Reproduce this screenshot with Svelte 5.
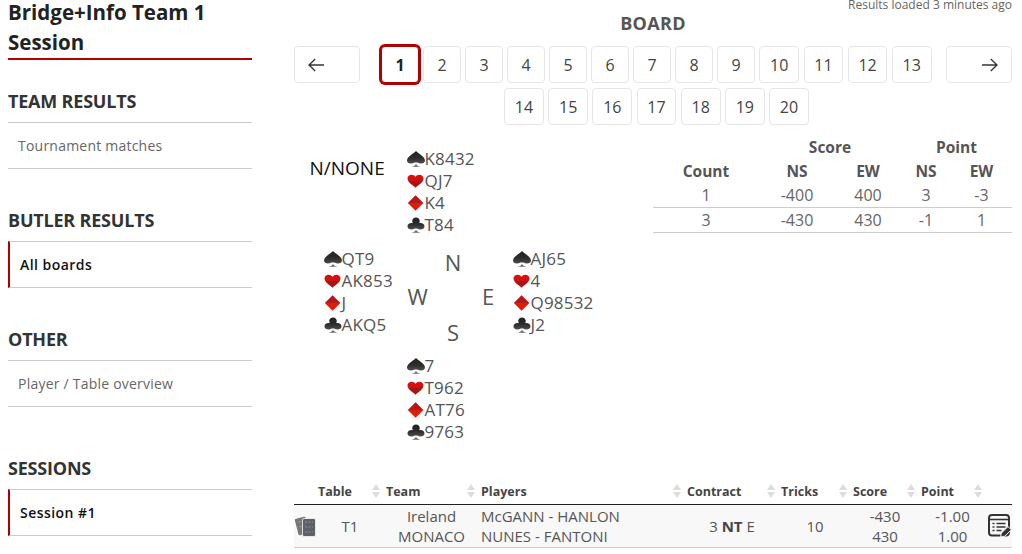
<script>
  const row1 = [1,2,3,4,5,6,7,8,9,10,11,12,13,14,15,16,17,18,19,20];
  const north = ['K8432','QJ7','K4','T84'];
  const west = ['QT9','AK853','J','AKQ5'];
  const east = ['AJ65','4','Q98532','J2'];
  const south = ['7','T962','AT76','9763'];
  const suits = ['spade','heart','diamond','club'];
  const heads = [
    { t: '', s: false }, { t: 'Table', s: true }, { t: 'Team', s: true }, { t: 'Players', s: true },
    { t: 'Contract', s: true }, { t: 'Tricks', s: true }, { t: 'Score', s: true }, { t: 'Point', s: true }, { t: '', s: false }
  ];
</script>

{#snippet suit(name)}
  <svg class="suit" viewBox="0 0 18 18" aria-hidden="true">
    {#if name === 'spade'}
      <path fill="url(#gDark)" d="M9 1C7.6 3.2 0 6.2 0 10.6 0 13.8 4.6 14.4 7.6 12.6L10.4 12.6C13.4 14.4 18 13.8 18 10.6 18 6.2 10.4 3.2 9 1Z"/>
      <path fill="#666" d="M4.5 16.8Q8.4 16.2 9 13.8 9.6 16.2 13.5 16.8Z"/>
    {:else if name === 'heart'}
      <path fill="url(#gHeart)" d="M8.5 15.8C6 13.4.5 10.6.5 6.6.5 4.2 2.4 2.8 4.6 2.8 6.4 2.8 7.7 3.6 8.5 4.8 9.3 3.6 10.6 2.8 12.4 2.8 14.6 2.8 16.5 4.2 16.5 6.6 16.5 10.6 11 13.4 8.5 15.8Z"/>
    {:else if name === 'diamond'}
      <path fill="url(#gDiamond)" d="M8.6 1.2L16.4 9 8.6 16.8.8 9Z"/>
    {:else}
      <path fill="url(#gDark)" d="M9 1.5C6.8 1.5 5.2 3.1 5.2 5 5.2 5.9 5.5 6.6 6 7.2 3 6.4.5 7.9.5 10.4.5 13.2 4.8 14.4 7.8 12.4L10.2 12.4C13.2 14.4 17.5 13.2 17.5 10.4 17.5 7.9 15 6.4 12 7.2 12.5 6.6 12.8 5.9 12.8 5 12.8 3.1 11.2 1.5 9 1.5Z"/>
      <path fill="#666" d="M4.5 16.8Q8.4 16.2 9 13.6 9.6 16.2 13.5 16.8Z"/>
    {/if}
  </svg>
{/snippet}

{#snippet hand(cards)}
  <div class="hand">
    {#each cards as c, i}
      <div class="card">{@render suit(suits[i])}<span>{c}</span></div>
    {/each}
  </div>
{/snippet}

<svg class="defs" width="0" height="0" aria-hidden="true">
  <defs>
    <linearGradient id="gDark" x1="0" y1="0" x2="0" y2="1">
      <stop offset="0" stop-color="#222"/><stop offset="0.55" stop-color="#2c2c2c"/><stop offset="1" stop-color="#4e4e4e"/>
    </linearGradient>
    <linearGradient id="gHeart" x1="0" y1="0" x2="0" y2="1">
      <stop offset="0" stop-color="#d81212"/><stop offset="0.5" stop-color="#d01010"/><stop offset="0.5" stop-color="#aa1414"/><stop offset="1" stop-color="#aa1414"/>
    </linearGradient>
    <linearGradient id="gDiamond" x1="0" y1="0" x2="0" y2="1">
      <stop offset="0" stop-color="#b01818"/><stop offset="0.5" stop-color="#b81818"/><stop offset="0.5" stop-color="#e41a08"/><stop offset="1" stop-color="#e41a08"/>
    </linearGradient>
  </defs>
</svg>

<div class="page">
  <aside>
    <h1><span>Bridge+Info Team 1</span><span>Session</span></h1>
    <h2 class="first">TEAM RESULTS</h2>
    <a class="item">Tournament matches</a>
    <h2>BUTLER RESULTS</h2>
    <a class="item active">All boards</a>
    <h2>OTHER</h2>
    <a class="item">Player / Table overview</a>
    <h2 class="last">SESSIONS</h2>
    <a class="item active">Session #1</a>
    <a class="item nb">Session #2</a>
  </aside>

  <main>
    <div class="loaded">Results loaded 3 minutes ago</div>
    <div class="board-title">BOARD</div>

    <nav>
      <button class="nav prev" aria-label="Previous">
        <svg width="16" height="16" viewBox="0 0 16 16"><path fill="none" stroke="#333" stroke-width="1.3" d="M16 8H1M7.2 2 1 8l6.2 6"/></svg>
      </button>
      <div class="nums">
        {#each row1 as n}
          <button class="num" class:sel={n === 1}>{n}</button>
        {/each}
      </div>
      <button class="nav next" aria-label="Next">
        <svg width="16" height="16" viewBox="0 0 16 16"><path fill="none" stroke="#333" stroke-width="1.3" d="M0 8h15M8.8 2 15 8l-6.2 6"/></svg>
      </button>
    </nav>

    <section class="top">
      <div class="deal">
        <div class="dealer">N/NONE</div>
        {@render hand(north)}
        <div></div>
        <div class="west">{@render hand(west)}</div>
        <div class="compass">
          <span class="cn">N</span>
          <span class="cw">W</span>
          <span class="ce">E</span>
          <span class="cs">S</span>
        </div>
        {@render hand(east)}
        <div></div>
        {@render hand(south)}
      </div>

      <table class="scores">
        <colgroup><col class="c1"/><col class="c2"/><col class="c3"/><col class="c4"/><col class="c5"/></colgroup>
        <thead>
          <tr><th></th><th colspan="2">Score</th><th colspan="2">Point</th></tr>
          <tr><th>Count</th><th>NS</th><th>EW</th><th>NS</th><th>EW</th></tr>
        </thead>
        <tbody>
          <tr><td>1</td><td>-400</td><td>400</td><td>3</td><td>-3</td></tr>
          <tr><td>3</td><td>-430</td><td>430</td><td>-1</td><td>1</td></tr>
        </tbody>
      </table>
    </section>

    <table class="results">
      <colgroup>
        <col class="w0"/><col class="w1"/><col class="w2"/><col class="w3"/>
        <col class="w4"/><col class="w5"/><col class="w6"/><col class="w7"/><col class="w8"/>
      </colgroup>
      <thead>
        <tr>
          {#each heads as h}
            <th>
              {h.t}
              {#if h.s}
                <svg class="sort" width="8" height="14" viewBox="0 0 8 14"><path fill="#ddd" d="M4 0 8 6H0ZM4 14 0 8H8Z"/></svg>
              {/if}
            </th>
          {/each}
        </tr>
      </thead>
      <tbody>
        <tr class="odd">
          <td class="ic">
            <svg class="cards" width="22" height="24" viewBox="0 0 22 24">
              <rect x="1.5" y="3.5" width="11" height="17" rx="1.5" fill="#777" transform="rotate(-14 7 12)"/>
              <rect x="7.5" y="4.5" width="13" height="18" rx="1.5" fill="#5d6069" stroke="#f7f7f7" stroke-width=".8"/>
              <path fill="none" stroke="#8b8e96" stroke-width="1" stroke-dasharray="2 1.5" d="M10 8h8M10 13h8M10 18h8"/>
              <path fill="none" stroke="#aaa" stroke-width="1" stroke-dasharray="2 1.5" d="M3.5 8l3-.7M4.5 13l2-.5"/>
            </svg>
          </td>
          <td class="c">T1</td>
          <td class="c">Ireland<br/>MONACO</td>
          <td>McGANN - HANLON<br/>NUNES - FANTONI</td>
          <td class="c">3 <b>NT</b> E</td>
          <td class="c">10</td>
          <td class="c">-430<br/>430</td>
          <td class="c">-1.00<br/>1.00</td>
          <td class="ic">
            <svg class="edit" width="24" height="24" viewBox="0 0 24 24">
              <rect x="1" y="1" width="20" height="20.5" rx="3" fill="none" stroke="#333" stroke-width="2"/>
              <path d="M1 5.5h20" stroke="#333" stroke-width="1.6"/>
              <path d="M4.5 9.5h2M8.5 9.5h9M4.5 13h2M8.5 13h9M4.5 16.5h2M8.5 16.5h5" stroke="#333" stroke-width="1.7"/>
              <path d="M12.5 23 13.4 19 20 12.5 23.4 15.8 16.8 22.2Z" fill="#333" stroke="#f7f7f7" stroke-width="1"/>
            </svg>
          </td>
        </tr>
      </tbody>
    </table>
  </main>
</div>

<style>
  :global(body) { margin: 0; overflow: hidden; background: #fff; }
  .defs { position: absolute; }
  .page {
    display: flex;
    height: 554px;
    width: 1022px;
    overflow: hidden;
    font-family: "Open Sans", sans-serif;
    color: #555;
  }
  aside { width: 244px; margin-left: 8px; flex: none; }
  h1 {
    margin: 0;
    padding-bottom: 4px;
    font-size: 20.5px;
    line-height: 24px;
    font-weight: 700;
    color: #222;
    border-bottom: 2px solid #b00000;
  }
  h1 span { display: block; }
  h1 span + span { margin-top: 6px; }
  h2 {
    margin: 39px 0 9px;
    font-size: 18px;
    line-height: 24px;
    font-weight: 700;
    letter-spacing: -.2px;
    color: #333;
  }
  h2.first { margin-top: 29px; }
  h2.last { margin-top: 49px; }
  .item {
    display: flex;
    align-items: center;
    height: 45px;
    padding-left: 10px;
    border-top: 1px solid #ccc;
    border-bottom: 1px solid #ccc;
    font-size: 14px;
    letter-spacing: .22px;
    color: #666;
  }
  .item.active {
    border-left: 2px solid #b00000;
    padding-left: 10px;
    font-weight: 600;
    letter-spacing: .45px;
    color: #111;
  }
  .item.nb { border-top: 0; padding-top: 2px; height: 43px; }

  main { width: 718px; margin-left: 42px; flex: none; position: relative; }
  .loaded {
    position: absolute;
    top: 0;
    right: 0;
    font-size: 12px;
    line-height: 10px;
    color: #666;
  }
  .board-title {
    margin-top: 11px;
    text-align: center;
    font-size: 18px;
    line-height: 24px;
    font-weight: 700;
    letter-spacing: .3px;
    color: #555;
  }
  nav { display: flex; align-items: flex-start; margin-top: 11px; }
  button {
    font-family: inherit;
    background: #fff;
    border: 1px solid #e6e6e6;
    border-radius: 4px;
    height: 37px;
    color: #444;
    padding: 0;
  }
  .nav { width: 66px; flex: none; display: flex; align-items: center; }
  .prev { padding-left: 13px; }
  .next { justify-content: flex-end; padding-right: 13px; }
  .nums {
    flex: 1;
    display: flex;
    flex-wrap: wrap;
    justify-content: center;
    gap: 5px 4.5px;
    padding-left: 7px;
  }
  .num {
    min-width: 37.5px;
    padding: 0 9.7px;
    font-size: 16px;
    box-sizing: border-box;
  }
  .num.sel {
    border-color: #b00000;
    box-shadow: 0 0 0 2px #b00000;
    font-weight: 700;
    color: #222;
  }

  .top { display: flex; align-items: flex-start; margin-top: 10px; }
  .deal {
    width: 359px;
    flex: none;
    margin-top: 13px;
    display: grid;
    grid-template-columns: 112.5px 106px 1fr;
    grid-template-rows: 88px 119px 88px;
  }
  .dealer {
    padding: 6px 0 0 15.5px;
    font-size: 19px;
    line-height: 28px;
    color: #111;
  }
  .west { padding-left: 29.5px; }
  .hand { font-size: 17px; line-height: 22px; color: #555; }
  .card { display: flex; align-items: center; height: 22px; }
  .card span { letter-spacing: .2px; }
  .suit { width: 18px; height: 18px; flex: none; }
  .deal > :nth-child(4), .deal > :nth-child(5), .deal > :nth-child(6) { margin-top: 12px; }
  .compass {
    display: grid;
    grid-template-columns: 22.5px 48px 22px;
    grid-template-rows: 28px 40px 32px;
    font-size: 22px;
    color: #555;
    height: 100px;
  }
  .compass span { display: flex; align-items: center; justify-content: center; }
  .cn { grid-column: 2; grid-row: 1; }
  .cw { grid-column: 1; grid-row: 2; }
  .ce { grid-column: 3; grid-row: 2; }
  .cs { grid-column: 2; grid-row: 3; }

  table { border-collapse: collapse; table-layout: fixed; }
  .scores { width: 359px; font-size: 16px; color: #666; }
  .c1 { width: 106px; } .c2 { width: 76px; } .c3 { width: 66px; } .c4 { width: 50px; } .c5 { width: 61px; }
  .scores th { height: 24px; padding: 0; font-size: 15.5px; font-weight: 700; color: #555; text-align: center; line-height: 24px; }
  .scores td { height: 24px; padding: 0; text-align: center; border-bottom: 1px solid #ccc; line-height: 24px; }

  .w0 { width: 22px; } .w1 { width: 68px; } .w2 { width: 95px; } .w3 { width: 206px; }
  .w4 { width: 94px; } .w5 { width: 72px; } .w6 { width: 68px; } .w7 { width: 67px; } .w8 { width: 26px; }
  .results { width: 718px; margin-top: 36px; font-size: 15px; color: #555; }
  .results th {
    position: relative;
    height: 25px;
    padding: 0 0 0 2px;
    text-align: left;
    font-size: 12.5px;
    font-weight: 700;
    color: #444;
    border-bottom: 1px solid #222;
  }
  .sort { position: absolute; right: 4px; top: 5px; }
  .results td { padding: 1px 0; line-height: 20px; height: 40px; border-bottom: 1px solid #ccc; }
  .results td:nth-child(4) { padding-left: 2px; }
  .odd td { background: #f8f8f8; }
  .c { text-align: center; }
  .results b { font-weight: 700; color: #444; }
  .ic svg { display: block; }
  .cards { margin-left: 1px; }
  .edit { margin-left: 2px; }
</style>
